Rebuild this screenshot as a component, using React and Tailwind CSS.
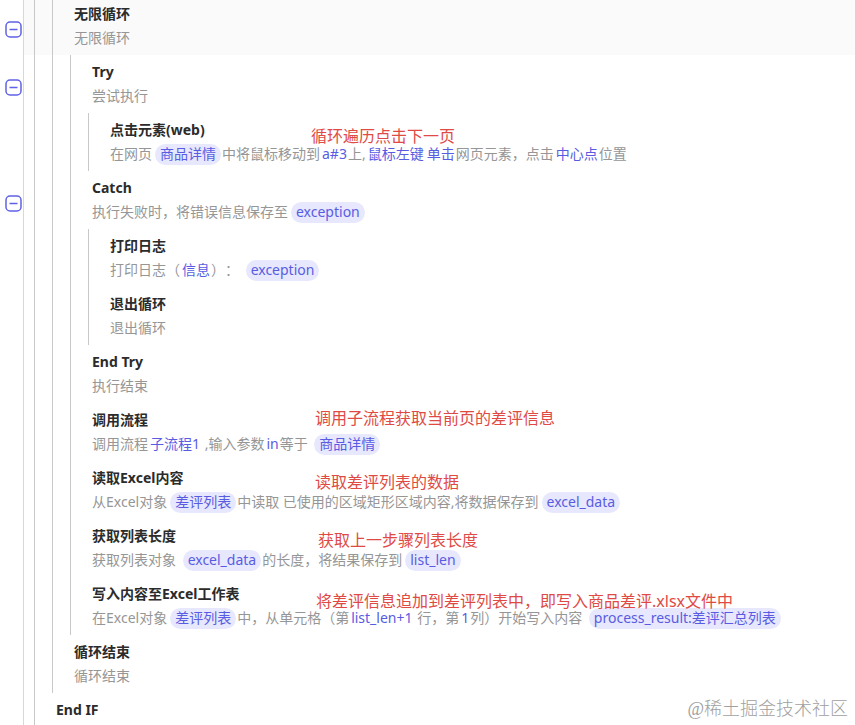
import React, { useState } from "react";

// Pill component, a variable chip inside a step description
const Pill = ({ children }) => (
  <span className="ml-[3px] mr-px inline-block h-[21px] rounded-full bg-[#e7e8fd] px-[5px] leading-5 text-[#595ce2]">
    {children}
  </span>
);

// Value component, a highlighted setting inside a step description
const Value = ({ children }) => (
  <span className="ml-[2px] mr-px text-[#595ce2]">{children}</span>
);

// flow steps, depth is the number of guide lines left of the step
const steps = [
  { title: "无限循环", text: "无限循环", depth: 2, foldable: true, active: true },
  { title: "Try", text: "尝试执行", depth: 3, foldable: true },
  {
    title: "点击元素(web)",
    depth: 4,
    text: (
      <>
        在网页<Pill>商品详情</Pill>中将鼠标移动到<Value>a#3</Value>上,
        <Value>鼠标左键</Value>
        <Value>单击</Value>网页元素，点击<Value>中心点</Value>位置
      </>
    ),
    note: "循环遍历点击下一页",
    notePlace: "left-[311px] top-[11px]",
  },
  {
    title: "Catch",
    depth: 3,
    foldable: true,
    text: (
      <>
        执行失败时，将错误信息保存至<Pill>exception</Pill>
      </>
    ),
  },
  {
    title: "打印日志",
    depth: 4,
    text: (
      <>
        打印日志（<Value>信息</Value>）： <Pill>exception</Pill>
      </>
    ),
  },
  { title: "退出循环", text: "退出循环", depth: 4 },
  { title: "End Try", text: "执行结束", depth: 3 },
  {
    title: "调用流程",
    depth: 3,
    text: (
      <>
        调用流程<Value>子流程1</Value> ,输入参数<Value>in</Value>等于{" "}
        <Pill>商品详情</Pill>
      </>
    ),
    note: "调用子流程获取当前页的差评信息",
    notePlace: "left-[315px] top-[3px]",
  },
  {
    title: "读取Excel内容",
    depth: 3,
    text: (
      <>
        从Excel对象<Pill>差评列表</Pill>中读取 已使用的区域矩形区域内容,将数据保存到
        <Pill>excel_data</Pill>
      </>
    ),
    note: "读取差评列表的数据",
    notePlace: "left-[315px] top-[9px]",
  },
  {
    title: "获取列表长度",
    depth: 3,
    text: (
      <>
        获取列表对象 <Pill>excel_data</Pill>的长度，将结果保存到
        <Pill>list_len</Pill>
      </>
    ),
    note: "获取上一步骤列表长度",
    notePlace: "left-[318px] top-[9px]",
  },
  {
    title: "写入内容至Excel工作表",
    depth: 3,
    text: (
      <>
        在Excel对象<Pill>差评列表</Pill>中，从单元格（第<Value>list_len+1</Value>{" "}
        行，第<Value>1</Value>列）开始写入内容 <Pill>process_result:差评汇总列表</Pill>
      </>
    ),
    note: "将差评信息追加到差评列表中，即写入商品差评.xlsx文件中",
    notePlace: "left-[316px] top-[12px]",
  },
  { title: "循环结束", text: "循环结束", depth: 2 },
  { title: "End IF", text: "", depth: 1 },
];

// FoldButton component
const FoldButton = ({ label }) => {
  const [open, setOpen] = useState(true); // open state

  return (
    <button
      type="button"
      aria-label={label}
      aria-expanded={open}
      className="block size-[17px] text-[#5f62e6]"
      onClick={() => setOpen(!open)}>
      <svg viewBox="0 0 17 17" fill="none" stroke="currentColor" strokeWidth="1.5">
        <rect x="1" y="1" width="15" height="15" rx="4" />
        <path d="M4.5 8.5h8" />
        {!open && <path d="M8.5 4.5v8" />}
      </svg>
    </button>
  );
};

// Step component, one row of the flow
const Step = ({ step }) => (
  <li className="relative flex h-[58px]">
    <div className="w-6 shrink-0 border-r border-[#d8d8d8] pl-[5px] pt-6">
      {step.foldable && <FoldButton label={step.title} />}
    </div>
    <div
      className={
        step.active ? "flex grow bg-[#fafafa] pl-[10px]" : "flex grow pl-[10px]"
      }>
      {Array.from({ length: step.depth }, (_, i) => (
        <span key={i} className="w-[18px] shrink-0 border-l border-[#c8c8c8]" />
      ))}
      <div className="pl-1 pt-[5px] whitespace-nowrap">
        <h2 className="leading-6 font-bold text-[#2b2b2b]">{step.title}</h2>
        <p className="leading-6 text-[#969696]">{step.text}</p>
      </div>
    </div>
    {step.note && (
      <p
        className={`absolute text-base leading-6 whitespace-nowrap text-[#e04a45] ${step.notePlace}`}>
        {step.note}
      </p>
    )}
  </li>
);

const App = () => {
  return (
    <main className="relative h-screen overflow-hidden bg-white font-['Noto_Sans','Noto_Sans_CJK_SC',sans-serif] text-sm [text-spacing-trim:space-all]">
      <ol className="-mt-[3px]">
        {steps.map((step, i) => (
          <Step key={i} step={step} />
        ))}
      </ol>
      <p className="absolute right-[7px] bottom-1 font-['Liberation_Serif','Noto_Sans_CJK_SC',serif] text-lg leading-6 font-light text-[#a0a0a0]">
        @稀土掘金技术社区
      </p>
    </main>
  );
};

export default App;
